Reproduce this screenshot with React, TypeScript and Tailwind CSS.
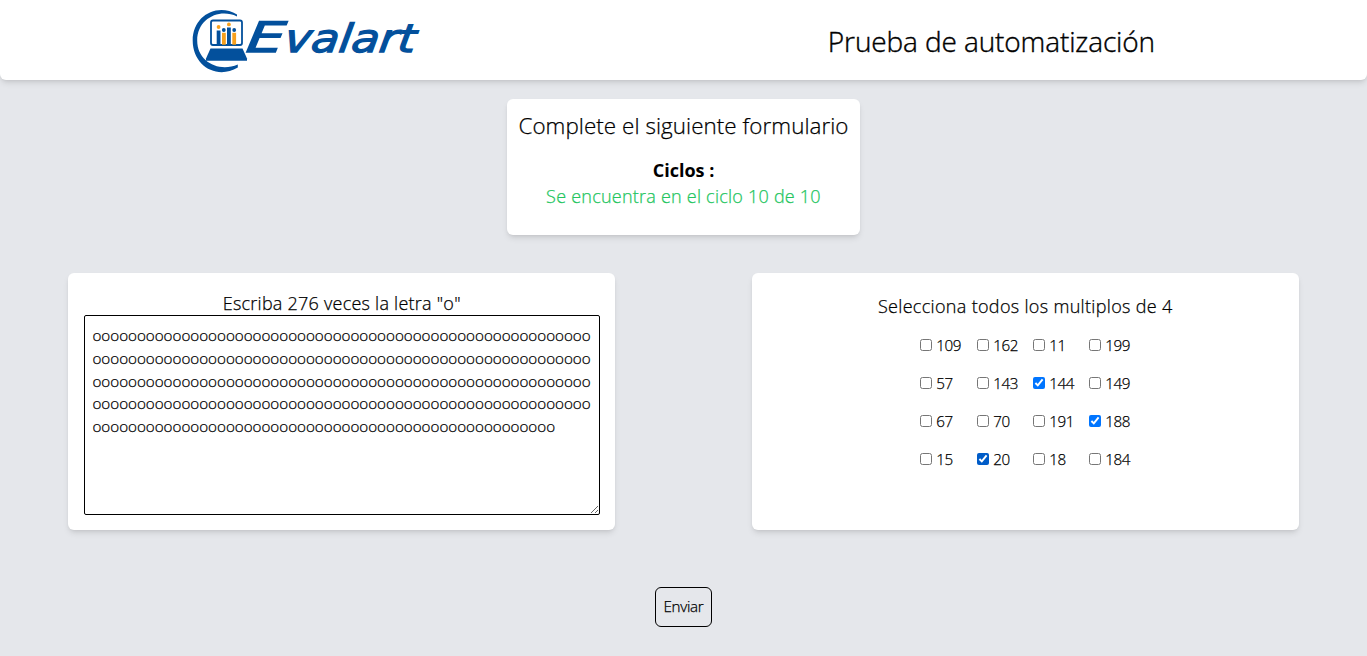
import React from "react";

type Option = { value: number; checked?: boolean; active?: boolean };

const options: Option[] = [
  { value: 109 }, { value: 162 }, { value: 11 }, { value: 199 },
  { value: 57 }, { value: 143 }, { value: 144, checked: true }, { value: 149 },
  { value: 67 }, { value: 70 }, { value: 191 }, { value: 188, checked: true },
  { value: 15 }, { value: 20, checked: true, active: true }, { value: 18 }, { value: 184 },
];

function Logo() {
  return (
    <svg width="232" height="72" viewBox="190 4 232 72" role="img" aria-label="Evalart">
      <path
        d="M237 14.500 C217 2.500 192.700 16 192.700 40.500 C192.700 66 217 80 237.800 67.500 L237.800 64.500 C219 72.500 197.200 62 197.200 40.500 C197.200 19 219 8 237 16.500 Z"
        fill="#03509c"
      />
      <rect x="211" y="20.500" width="31" height="24.500" rx="2" fill="#fff" stroke="#03509c" strokeWidth="1.800" />
      <path d="M210.500 48.500 H242.500 L247 58.500 V60.800 H206 V58.500 Z" fill="#03509c" />
      <g fill="#03509c">
        <rect x="216.700" y="30.500" width="3.800" height="14.200" />
        <rect x="227" y="27.500" width="3.800" height="17.200" />
        <circle cx="223.800" cy="30" r="1.900" />
        <circle cx="234.200" cy="30" r="1.900" />
      </g>
      <g fill="#f8a01c">
        <rect x="222" y="32.800" width="3.800" height="11.900" />
        <rect x="232.300" y="32.800" width="3.800" height="11.900" />
        <circle cx="218.600" cy="27" r="1.900" />
        <circle cx="228.900" cy="24.400" r="1.900" />
      </g>
      <g
        className="font-['DejaVu_Sans',sans-serif] font-normal italic"
        fill="#03509c"
        stroke="#03509c"
        strokeWidth="1.300"
        transform="translate(7.500 0) skewX(-8)"
      >
        <text x="245" y="52" textLength="38" lengthAdjust="spacingAndGlyphs" className="text-[42px]">
          E
        </text>
        <text x="283" y="52" textLength="131" lengthAdjust="spacingAndGlyphs" className="text-[39px]">
          valart
        </text>
      </g>
    </svg>
  );
}

export default function App() {
  return (
    <div className="h-[656px] overflow-hidden bg-[#e5e7eb] font-['Open_Sans','Noto_Sans',sans-serif] text-[15.2px] leading-[22.8px] font-light text-black">
      <header className="flex h-20 justify-between rounded-b-[6px] bg-white pl-[190px] pr-[212px] pt-1 shadow-md">
        <Logo />
        <h1 className="pt-[20px] text-[28px] leading-[34px] font-light tracking-[-0.120px] whitespace-nowrap [-webkit-text-stroke:0.4px]">Prueba de automatización</h1>
      </header>

      <section className="mx-auto mt-[19px] h-[136px] w-[353px] rounded-[6px] bg-white pt-[12px] text-center shadow-md">
        <h2 className="text-[22.4px] leading-[30px] font-light tracking-[0.060px] whitespace-nowrap [-webkit-text-stroke:0.25px]">Complete el siguiente formulario</h2>
        <p className="mt-[16px] text-[18px] leading-[26px] font-bold">Ciclos :</p>
        <p className="text-[18px] leading-[26px] tracking-[0.230px] text-[#22c55e] [-webkit-text-stroke:0.25px]">Se encuentra en el ciclo 10 de 10</p>
      </section>

      <main className="mt-[38px] grid grid-cols-2 [-webkit-text-stroke:0.25px]">
        <section className="mx-auto h-[257px] w-4/5 rounded-[6px] bg-white px-[15.500px] pt-[17px] text-center shadow-md">
          <p className="pt-px text-[18px] leading-[24px] tracking-[0.240px]">Escriba 276 veces la letra "o"</p>
          <textarea
            className="block h-[200px] w-full resize rounded-[2px] border border-black bg-white py-[8px] pr-[4px] pl-[7.600px] tracking-[-0.010px] break-all outline-none [-webkit-text-stroke:0.25px]"
            defaultValue={"o".repeat(276)}
            spellCheck={false}
          />
        </section>

        <section className="mx-auto h-[257px] w-4/5 rounded-[6px] bg-white pt-[20px] shadow-md">
          <p className="text-center text-[18px] leading-[26px] tracking-[0.320px]">Selecciona todos los multiplos de 4</p>
          <div className="mx-auto mt-[7px] grid w-[225px] grid-cols-[57px_56px_56px_56px] pl-[7px]">
            {options.map(({ value, checked, active }) => (
              <label key={value} className="flex h-[38px] items-center gap-[4.600px] tracking-[-0.400px]">
                <input
                  type="checkbox"
                  defaultChecked={checked}
                  className={active ? "mb-[1px] size-[12px] accent-[#005cc8]" : "mb-[1px] size-[12px]"}
                />
                {value}
              </label>
            ))}
          </div>
        </section>
      </main>

      <div className="mt-[57px] flex justify-center">
        <button className="h-[40px] w-[57px] rounded-[6px] border border-black pb-[2px] tracking-[-0.300px] [-webkit-text-stroke:0.25px]">Enviar</button>
      </div>
    </div>
  );
}
